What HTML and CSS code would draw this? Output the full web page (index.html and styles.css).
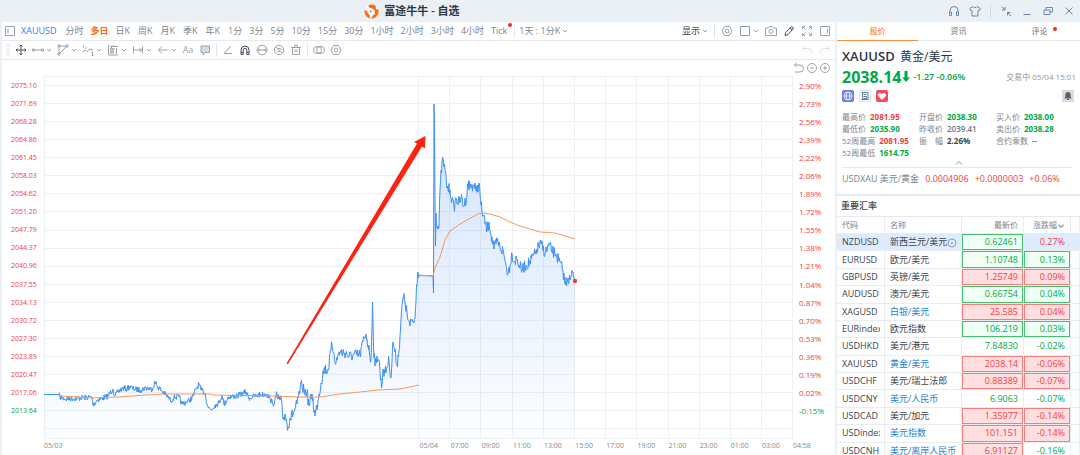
FILE: index.html
```html
<!DOCTYPE html>
<html lang="zh-CN">
<head>
    <meta charset="UTF-8">
    <meta name="viewport" content="width=device-width, initial-scale=1.0">
    <title>富途牛牛 - 自选</title>
    <link rel="stylesheet" href="styles.css">
</head>
<body>
    <!-- shared icons -->
    <svg class="defs" width="0" height="0" aria-hidden="true">
        <symbol id="chev" viewBox="0 0 6 6"><path d="M1 2l2 2 2-2"/></symbol>
        <symbol id="hex" viewBox="0 0 12 12"><path d="M3.500 1.500h5L11 6l-2.500 4.500h-5L1 6z"/><circle cx="6" cy="6" r="2"/></symbol>
    </svg>

    <header class="titlebar">
        <div class="brand">
            <svg class="logo" viewBox="0 0 16 16"><circle cx="8" cy="8" r="7.500" fill="#ff6a13"/><path d="M.600 6C1.200 3.500 2.800 1.700 4.800 1c-.300 1.800.500 3 2.200 3.200 2.500.300 4.500 1.800 4.700 4.300.200 2-.700 3-2.200 3.200-.200 1.800-1.500 3.200-3.500 3.600.600-1.500.500-2.800-.300-3.800C4 10.500 3.300 9 3.500 7.200 2.300 7.300 1.300 7 .600 6zM12.500 1.800L15.500 5l-2.800 1z" fill="#fff"/><circle cx="7.300" cy="7.800" r="1" fill="#ff6a13"/></svg>
            <h1>富途牛牛 - 自选</h1>
        </div>
        <div class="window-btns">
            <button aria-label="客服"><svg class="ico" viewBox="0 0 12 12"><path d="M2 7V5.500a4 4 0 0 1 8 0V7M1.500 7h2v3.500h-2zM8.500 7h2v3.500h-2z"/></svg></button>
            <button aria-label="皮肤"><svg class="ico" viewBox="0 0 12 12"><path d="M4 1.500L.700 3.500 2 6l1-.500V11h6V5.500l1 .500 1.300-2.500L8 1.500C7.500 3 4.500 3 4 1.500z"/></svg></button>
            <i class="sep"></i>
            <button aria-label="精简"><svg class="ico" viewBox="0 0 12 12"><path d="M1.500 1.500L5 5M2 5h3V2M11 11L7.500 7.500M7.500 10.500v-3h3"/></svg></button>
            <button aria-label="最小化"><svg class="ico" viewBox="0 0 12 12"><path d="M2.500 9.500h7"/></svg></button>
            <button aria-label="还原"><svg class="ico" viewBox="0 0 12 12"><path d="M2 5h6v4.500H2zM4 5V2.500h6.500V7H8"/></svg></button>
            <button aria-label="关闭"><svg class="ico" viewBox="0 0 12 12"><path d="M2.500 2.500l7 7M9.500 2.500l-7 7"/></svg></button>
        </div>
    </header>

    <div class="main">
        <section class="chart-pane">
            <nav class="periods">
                <button aria-label="侧栏"><svg class="ico" viewBox="0 0 12 12"><path d="M1.500 1.500h9v9h-9zM4 3.500v5"/></svg></button>
                <button class="symbol">XAUUSD</button>
                <button>分时</button>
                <button class="on">多日</button>
                <button class="k">日K</button>
                <button class="k">周K</button>
                <button class="k">月K</button>
                <button class="k">季K</button>
                <button class="k">年K</button>
                <button>1分</button>
                <button>3分</button>
                <button>5分</button>
                <button>10分</button>
                <button>15分</button>
                <button>30分</button>
                <button>1小时</button>
                <button>2小时</button>
                <button>3小时</button>
                <button>4小时</button>
                <button class="tick">Tick<i class="dot"></i></button>
                <button class="range">1天 : 1分K<svg class="chev"><use href="#chev"/></svg></button>
                <div class="period-tools">
                    <button class="show">显示<svg class="chev"><use href="#chev"/></svg></button>
                    <i class="sep"></i>
                    <button aria-label="设置"><svg class="ico"><use href="#hex"/></svg></button>
                    <button aria-label="布局" class="layout"><svg class="ico blue" viewBox="0 0 12 12"><path d="M1.500 1.500h9v9h-9z"/></svg><svg class="chev"><use href="#chev"/></svg></button>
                    <button aria-label="截图"><svg class="ico" viewBox="0 0 12 12"><path d="M.5 3h3l1-1.500h3l1 1.500h3v7.500H.5z"/><circle cx="6" cy="6.500" r="2"/></svg></button>
                    <button aria-label="画线"><svg class="ico dark" viewBox="0 0 12 12"><path d="M2 10.500l.800-3L8 2c1-1 3 .700 2 2L4.800 9.700zM7 3l2 2"/></svg></button>
                    <button aria-label="全屏"><svg class="ico" viewBox="0 0 12 12"><path d="M1.500 4V1.500H4M8 1.500h2.500V4M10.500 8v2.500H8M4 10.500H1.500V8M2 2l2.500 2.500M10 2L7.500 4.500M10 10L7.500 7.500M2 10l2.500-2.500"/></svg></button>
                    <button aria-label="右侧栏"><svg class="ico" viewBox="0 0 12 12"><path d="M1.500 1.500h9v9h-9zM8.500 3.500v5"/></svg></button>
                </div>
            </nav>

            <div class="draw-tools">
                <i class="grip"></i>
                <button aria-label="移动"><svg class="ico dark" viewBox="0 0 12 12"><path d="M6 1v10M1 6h10M4.500 2.500L6 1l1.500 1.500M4.500 9.500L6 11l1.500-1.500M2.500 4.500L1 6l1.500 1.500M9.500 4.500L11 6 9.500 7.500"/></svg></button>
                <button aria-label="线段"><svg class="ico" viewBox="0 0 12 12"><path d="M3 6h6M.5 5h2v2h-2zM9.500 5h2v2h-2z"/></svg><svg class="chev"><use href="#chev"/></svg></button>
                <button aria-label="形状"><svg class="ico" viewBox="0 0 12 12"><path d="M3 2h6M2 3v6M9 3L3 9M1 1h2v2H1zM9 1h2v2H9zM1 9h2v2H1z"/></svg><svg class="chev"><use href="#chev"/></svg></button>
                <button aria-label="波浪"><svg class="ico" viewBox="0 0 12 12"><path d="M.5 8.500L3 6l2 1.500L8 5l3 1M1.500 1.500v2M3 5l1.500-2M9.500 8.500l1-.500v3.500M9.500 11.500h2"/></svg><svg class="chev"><use href="#chev"/></svg></button>
                <button aria-label="形态"><svg class="ico" viewBox="0 0 12 12"><path d="M1.500 1v10H11M3 2.500h8M3 5h5M3 8h4M4 10V4l3-3M9.500 4v6M6 4v6"/></svg><svg class="chev"><use href="#chev"/></svg></button>
                <button aria-label="测量"><svg class="ico" viewBox="0 0 12 12"><path d="M1.500 2.500v7M10.500 2.500v7M2 6h8M7.500 4l2 2-2 2"/></svg><svg class="chev"><use href="#chev"/></svg></button>
                <button aria-label="箭头"><svg class="ico" viewBox="0 0 12 12"><path d="M1.500 6h9M5 2.500L1.500 6 5 9.500"/></svg><svg class="chev"><use href="#chev"/></svg></button>
                <button class="aa">Aa</button>
                <button aria-label="批注"><svg class="ico" viewBox="0 0 12 12"><path d="M2 2h8.500v6.500H6L4 11V8.500H2z" fill="#d9dde2"/></svg></button>
                <i class="sep"></i>
                <button aria-label="角度"><svg class="ico" viewBox="0 0 12 12"><path d="M9 2L2 9.500h8"/></svg></button>
                <button aria-label="磁铁"><svg class="ico dark" viewBox="0 0 12 12"><path d="M2 10.500V6a4 4 0 0 1 8 0v4.500H7.800V6a1.800 1.800 0 0 0-3.600 0v4.500zM2 8.500h2M8 8.500h2"/></svg></button>
                <button aria-label="连续"><svg class="ico" viewBox="0 0 12 12"><path d="M1.500 4.500a4.700 4.700 0 0 1 9 0M1.500 7.500a4.700 4.700 0 0 0 9 0M3 6h6M1 5h2v2H1zM9 5h2v2H9z"/></svg></button>
                <button aria-label="隐藏"><svg class="ico" viewBox="0 0 12 12"><circle cx="6" cy="6" r="4.700"/><path d="M3 3l6 6M3.500 6.500C5 8 7 8 7.500 7.500M5 4.500c1.500-.500 3 .500 3.500 1.500"/></svg></button>
                <button aria-label="删除"><svg class="ico" viewBox="0 0 12 12"><path d="M1 3.500h10M4.500 3V1.500h3V3M2.500 3.500v7h7v-7M5 5.500v3M7 5.500v3"/></svg></button>
                <i class="sep"></i>
                <button aria-label="对比"><svg class="ico" viewBox="0 0 12 12"><path d="M4 2.500h1a3.500 3.500 0 0 1 0 7H4a3.500 3.500 0 0 1 0-7zM7 2.500h1a3.500 3.500 0 0 1 0 7H7a3.500 3.500 0 0 1 0-7z"/></svg></button>
                <button aria-label="画线设置"><svg class="ico"><use href="#hex"/></svg></button>
                <div class="history">
                    <button aria-label="撤销" disabled><svg class="ico" viewBox="0 0 12 12"><path d="M4.500 1.500L1.500 4.500l3 3M1.500 4.500H7c3 0 4 2 3.500 5"/></svg></button>
                    <button aria-label="重做" disabled><svg class="ico" viewBox="0 0 12 12"><path d="M7.500 1.500l3 3-3 3M10.500 4.500H5c-3 0-4 2-3.500 5"/></svg></button>
                </div>
            </div>

            <div class="zoom-tools">
                <button aria-label="重置"><svg class="ico" viewBox="0 0 12 12"><path d="M3.500 1L1.500 3l2 2M1.500 3H7a3.500 3.500 0 0 1 0 7H2"/></svg></button>
                <button aria-label="缩小"><svg class="ico" viewBox="0 0 12 12"><circle cx="6" cy="6" r="4.500"/><path d="M4 6h4"/></svg></button>
                <button aria-label="放大"><svg class="ico" viewBox="0 0 12 12"><circle cx="6" cy="6" r="4.500"/><path d="M4 6h4M6 4v4"/></svg></button>
            </div>

            <div class="chart">
                <div class="scale prices" id="prices"></div>
                <svg class="plot" id="plot" viewBox="44 76 749 363" preserveAspectRatio="none">
                    <defs>
                        <linearGradient id="fade" gradientUnits="userSpaceOnUse" x1="0" y1="104" x2="0" y2="439">
                            <stop offset="0" stop-color="#3c86f5" stop-opacity=".24"/>
                            <stop offset="1" stop-color="#3c86f5" stop-opacity=".01"/>
                        </linearGradient>
                    </defs>
                    <path id="grid" class="grid"/>
                    <path id="area" fill="url(#fade)"/>
                    <path id="line" class="line"/>
                    <path class="avg" d="M59 395L62 396 92 398 120 397 145 395 165 394 210 394 213 395 273 396 300 397 320 397 340 394 360 392 378 390 400 389 419 385"/>
                    <path class="avg" d="M419 275L433 276 435 268 440 257 445 240 450 231 457 226 467 220 478 214 483 213 490 214 500 217 510 222 520 226 533 230 540 232 555 233 565 236 575 239"/>
                    <circle cx="575" cy="281" r="2.200" fill="#f23a3a"/>
                    <path d="M286.500 363.500L417 143.500 414 142 425.500 136 425 148.500 422 146.500 288 364z" fill="#fa2314"/>
                </svg>
                <div class="scale percents" id="percents"></div>
            </div>
            <div class="times">
                <span>05/03</span><span>05/04</span><span>07:00</span><span>09:00</span><span>11:00</span><span>13:00</span><span>15:00</span><span>17:00</span><span>19:00</span><span>21:00</span><span>23:00</span><span>01:00</span><span>03:00</span><span>04:58</span>
            </div>
        </section>

        <aside class="quote">
            <nav class="tabs">
                <button class="on">报价</button>
                <button>资讯</button>
                <button><span class="tab-text">评论<i class="dot"></i></span></button>
            </nav>
            <div class="summary">
                <h2>XAUUSD <span>黄金/美元</span></h2>
                <div class="price-row">
                    <strong>2038.14</strong>
                    <svg class="down" viewBox="0 0 8 12"><path d="M2.500 0h3v6.500H8L4 11 0 6.500h2.500z" fill="#00a843"/></svg>
                    <b>-1.27 -0.06%</b>
                    <span class="status">交易中 05/04 15:01</span>
                </div>
                <div class="badges">
                    <svg viewBox="0 0 12 12"><rect width="12" height="12" rx="2" fill="#6b7fe8"/><g fill="none" stroke="#fff" stroke-width=".8"><circle cx="6" cy="6" r="4"/><ellipse cx="6" cy="6" rx="1.800" ry="4"/><path d="M2 6h8"/></g></svg>
                    <svg viewBox="0 0 12 12"><rect x=".5" y=".5" width="11" height="11" fill="#fff" stroke="#dce3ea"/><path d="M3.500 10V2.500M2.500 2.500h6.500v7M4.500 4.500h3M4.500 6.500h3v2h-3M2.500 9.500h7" fill="none" stroke="#5f7d9c"/></svg>
                    <svg viewBox="0 0 12 12"><rect width="12" height="12" rx="2" fill="#fb4564"/><path d="M6 10L2.300 6.300C.800 4.300 3.800 1.500 6 4c2.200-2.500 5.200.300 3.700 2.300z" fill="#fff"/></svg>
                    <button class="bell" aria-label="提醒"><svg viewBox="0 0 12 12"><path d="M6 2c2 0 2.700 1.500 2.700 3v2l1 1.500H2.300l1-1.500V5c0-1.500.700-3 2.700-3zM5 9h2v1H5z" fill="#59616b"/></svg></button>
                </div>
                <dl class="stats">
                    <div><dt>最高价</dt><dd class="up">2081.95</dd></div>
                    <div><dt>开盘价</dt><dd class="dn">2038.30</dd></div>
                    <div><dt>买入价</dt><dd class="dn">2038.00</dd></div>
                    <div><dt>最低价</dt><dd class="dn">2035.90</dd></div>
                    <div><dt>昨收价</dt><dd class="flat">2039.41</dd></div>
                    <div><dt>卖出价</dt><dd class="dn">2038.28</dd></div>
                    <div><dt>52周最高</dt><dd class="up">2081.95</dd></div>
                    <div><dt>振　幅</dt><dd>2.26%</dd></div>
                    <div><dt>合约乘数</dt><dd class="flat">--</dd></div>
                    <div><dt>52周最低</dt><dd class="dn">1614.75</dd></div>
                </dl>
                <button class="fold" aria-label="收起"><svg viewBox="0 0 8 6"><path d="M1 4.500l3-3 3 3"/></svg></button>
                <div class="related"><span>USDXAU 美元/黄金</span><em>0.0004906</em><em>+0.0000003</em><em>+0.06%</em></div>
            </div>
            <h3>重要汇率</h3>
            <div class="table-wrap">
                <table>
                    <colgroup><col class="c-code"><col class="c-name"><col class="c-price"><col class="c-change"><col></colgroup>
                    <thead>
                        <tr><th>代码</th><th>名称</th><th class="num">最新价</th><th class="num">涨跌幅<svg class="chev"><use href="#chev"/></svg></th><th></th></tr>
                    </thead>
                    <tbody>
                        <tr class="selected"><td><span>NZDUSD</span></td><td><span>新西兰元/美元<svg class="target" viewBox="0 0 10 10"><circle cx="5" cy="5" r="4"/><circle cx="5" cy="5" r=".6"/></svg></span></td><td class="num dn box">0.62461</td><td class="num up">0.27%</td><td></td></tr>
                        <tr><td><span>EURUSD</span></td><td><span>欧元/美元</span></td><td class="num dn box">1.10748</td><td class="num dn box">0.13%</td><td></td></tr>
                        <tr><td><span>GBPUSD</span></td><td><span>英镑/美元</span></td><td class="num up box">1.25749</td><td class="num up box">0.09%</td><td></td></tr>
                        <tr><td><span>AUDUSD</span></td><td><span>澳元/美元</span></td><td class="num dn box">0.66754</td><td class="num dn box">0.04%</td><td></td></tr>
                        <tr><td><span>XAGUSD</span></td><td><span><a href="#">白银/美元</a></span></td><td class="num up box">25.585</td><td class="num up box">0.04%</td><td></td></tr>
                        <tr><td><span>EURindex</span></td><td><span>欧元指数</span></td><td class="num dn box">106.219</td><td class="num dn box">0.03%</td><td></td></tr>
                        <tr><td><span>USDHKD</span></td><td><span>美元/港元</span></td><td class="num dn">7.84830</td><td class="num dn">-0.02%</td><td></td></tr>
                        <tr><td><span>XAUUSD</span></td><td><span><a href="#">黄金/美元</a></span></td><td class="num up box">2038.14</td><td class="num up box">-0.06%</td><td></td></tr>
                        <tr><td><span>USDCHF</span></td><td><span>美元/瑞士法郎</span></td><td class="num up box">0.88389</td><td class="num up box">-0.07%</td><td></td></tr>
                        <tr><td><span>USDCNY</span></td><td><span><a href="#">美元/人民币</a></span></td><td class="num dn">6.9063</td><td class="num dn">-0.07%</td><td></td></tr>
                        <tr><td><span>USDCAD</span></td><td><span>美元/加元</span></td><td class="num up box">1.35977</td><td class="num up box">-0.14%</td><td></td></tr>
                        <tr><td><span>USDindex</span></td><td><span><a href="#">美元指数</a></span></td><td class="num up box">101.151</td><td class="num up box">-0.14%</td><td></td></tr>
                        <tr><td><span>USDCNH</span></td><td><span><a href="#">美元/离岸人民币</a></span></td><td class="num up box">6.91127</td><td class="num dn">-0.16%</td><td></td></tr>
                    </tbody>
                </table>
            </div>
        </aside>
    </div>
    <script src="chart.js"></script>
</body>
</html>
```
FILE: styles.css
```css
* {
    box-sizing: border-box;
}
body {
    margin: 0;
    height: 100vh;
    display: flex;
    flex-direction: column;
    overflow: hidden;
    background: #ebf0f5;
    color: #3c444d;
    font-family: "Open Sans", "Noto Sans CJK SC", sans-serif;
    font-size: 8px;
    line-height: 12px;
}
button {
    display: flex;
    align-items: center;
    justify-content: center;
    gap: 2px;
    margin: 0;
    padding: 0;
    border: none;
    background: none;
    font: inherit;
    color: inherit;
    white-space: nowrap;
    cursor: pointer;
}
h1, h2, h3, dl, dd {
    margin: 0;
}
a {
    color: #1c7fd0;
    text-decoration: none;
}
.defs {
    position: absolute;
}
.ico {
    width: 12px;
    height: 12px;
    fill: none;
    stroke: #9aa2ab;
    stroke-width: 1;
}
.ico.dark {
    stroke: #454e5a;
}
.ico.blue {
    stroke: #7e9cc0;
}
.chev {
    width: 6px;
    height: 6px;
    fill: none;
    stroke: #9aa2ab;
    stroke-width: 1;
}
.sep {
    width: 1px;
    height: 14px;
    background: #e1e6eb;
}
.dot {
    position: absolute;
    top: -2px;
    right: -5px;
    width: 4px;
    height: 4px;
    border-radius: 50%;
    background: #f62b2b;
}
.up {
    color: #f23c3c;
}
.dn {
    color: #00a843;
}

/* title bar */
.titlebar {
    display: grid;
    grid-template-columns: 1fr auto 1fr;
    align-items: center;
    height: 22px;
    flex: none;
}
.brand {
    grid-column: 2;
    display: flex;
    align-items: center;
    gap: 5px;
    margin-right: 256px;
}
.logo {
    width: 15px;
    height: 15px;
}
.titlebar h1 {
    font-size: 11px;
    line-height: 16px;
    font-weight: 600;
    color: #2d3640;
    white-space: nowrap;
}
.window-btns {
    display: flex;
    justify-content: flex-end;
    align-items: center;
    gap: 9px;
    padding-right: 5px;
}
.window-btns .ico {
    stroke: #6d88a8;
}
.window-btns .sep {
    background: #d5dde5;
}

/* chart side */
.main {
    flex: 1;
    min-height: 0;
    display: flex;
    padding-left: 2px;
}
.chart-pane {
    flex: 1;
    min-width: 0;
    display: flex;
    flex-direction: column;
    background: #fff;
}
.periods, .draw-tools {
    display: flex;
    align-items: center;
    height: 19px;
    flex: none;
    border-bottom: 1px solid #e6eaee;
    color: #7b848e;
    font-size: 9px;
}
.periods {
    gap: 7px;
    padding: 0 4px 0 2px;
}
.periods .symbol {
    margin: 0 2px 0 -2px;
    color: #2f7df6;
}
.periods .on {
    color: #ff6a13;
    font-weight: 600;
}
.periods .k {
    padding-right: 1px;
}
.tick {
    position: relative;
}
.range {
    padding-left: 4px;
    border-left: 1px solid #e1e6eb;
}
.period-tools {
    display: flex;
    align-items: center;
    gap: 6px;
    margin-left: auto;
}
.show {
    color: #3c444d;
}
.draw-tools {
    gap: 5px;
    padding: 0 4px;
}
.grip {
    width: 4px;
    height: 12px;
    background: repeating-linear-gradient(#e3e7eb 0 1px, #fff 1px 2px);
}
.draw-tools .aa {
    width: 12px;
    color: #9aa2ab;
}
.history {
    display: flex;
    gap: 6px;
    margin-left: auto;
}
.history .ico {
    stroke: #dde1e6;
}
.zoom-tools {
    display: flex;
    justify-content: flex-end;
    gap: 1px;
    height: 16px;
    flex: none;
    padding-right: 4px;
}
.chart {
    flex: 1;
    min-height: 0;
    display: grid;
    grid-template-columns: 42px 1fr 42px;
    grid-template-rows: 100%;
}
.plot {
    display: block;
    width: 100%;
    height: 100%;
}
.grid {
    fill: none;
    stroke: #edf1f5;
    stroke-width: 1;
}
.line {
    fill: none;
    stroke: #3a8ff7;
    stroke-width: 1;
    stroke-linejoin: round;
}
.avg {
    fill: none;
    stroke: #f5995a;
    stroke-width: 1;
}
.scale {
    display: flex;
    flex-direction: column;
    padding: 1px 0 19px;
}
.scale span {
    flex: 1;
    display: flex;
    align-items: center;
}
.prices {
    padding-left: 9px;
    font-size: 7px;
}
.percents {
    padding-left: 6px;
}
.times {
    display: grid;
    grid-template-columns: 374fr repeat(12, 31fr) 0;
    height: 16px;
    flex: none;
    padding: 1px 42px 0;
    color: #7f8790;
    font-size: 7px;
    white-space: nowrap;
}

/* quote side */
.quote {
    width: 245px;
    flex: none;
    display: flex;
    flex-direction: column;
    background: #fff;
    border-left: 2px solid #ebf0f5;
}
.tabs {
    display: grid;
    grid-template-columns: repeat(3, 1fr);
    height: 19px;
    flex: none;
    border-bottom: 1px solid #e6eaee;
    color: #6b747e;
}
.tabs .on {
    margin-bottom: -1px;
    border-bottom: 1px solid #ff8a3c;
    color: #ff6a13;
}
.tab-text {
    position: relative;
}
.tab-text .dot {
    top: 2px;
    right: -9px;
}
.summary {
    padding: 6px 4px 0 5px;
}
.summary h2 {
    font-size: 13px;
    line-height: 18px;
    font-weight: 600;
    color: #2d3640;
}
.summary h2 span {
    margin-left: 2px;
    font-size: 12px;
    font-weight: 400;
}
.price-row {
    display: flex;
    align-items: center;
    height: 21px;
    color: #00a843;
}
.price-row strong {
    font-size: 16px;
}
.price-row b {
    margin-left: 3px;
    font-size: 9px;
    font-weight: 600;
}
.down {
    width: 8px;
    height: 12px;
    margin-left: 1px;
}
.status {
    margin-left: auto;
    color: #8d959e;
}
.badges {
    display: flex;
    align-items: center;
    gap: 5px;
    height: 17px;
}
.badges svg {
    width: 12px;
    height: 12px;
}
.bell {
    margin-left: auto;
    margin-right: 2px;
    background: #d8dce0;
}
.stats {
    display: grid;
    grid-template-columns: 77px 77px 1fr;
    margin-top: 7px;
}
.stats div {
    display: flex;
    gap: 4px;
    white-space: nowrap;
}
.stats dt {
    color: #7b848e;
}
.stats dd {
    font-weight: 700;
}
.stats .flat {
    font-weight: 600;
    color: #6b747e;
}
.fold {
    width: 100%;
    height: 8px;
}
.fold svg {
    width: 8px;
    height: 6px;
    fill: none;
    stroke: #7e93ab;
}
.related {
    display: flex;
    gap: 6px;
    margin-right: 4px;
    padding: 5px 0 9px;
    border-top: 1px solid #e6eaee;
    color: #7b848e;
    font-size: 9px;
    white-space: nowrap;
}
.related em {
    font-style: normal;
    color: #f23c3c;
}
.quote h3 {
    padding: 3px 4px;
    border-top: 2px solid #e3e9ef;
    border-bottom: 1px solid #e6eaee;
    font-size: 9px;
    line-height: 14px;
    font-weight: 500;
}
.table-wrap {
    flex: 1;
    min-height: 0;
    overflow: hidden;
}
table {
    width: 100%;
    height: 243px;
    table-layout: fixed;
    border-collapse: separate;
    border-spacing: 0;
    font-size: 9px;
}
.c-code {
    width: 48px;
}
.c-name {
    width: 77px;
}
.c-price {
    width: 62px;
}
.c-change {
    width: 47px;
}
th, td {
    padding: 0 0 0 5px;
    border-right: 1px solid #e9edf1;
    border-bottom: 1px solid #e9edf1;
    text-align: left;
    white-space: nowrap;
}
th {
    height: 17px;
    color: #7b848e;
    font-size: 8px;
    font-weight: 400;
}
td span {
    display: block;
    width: 38px;
    overflow: hidden;
}
td:nth-child(2) span {
    width: auto;
}
.num {
    padding: 0 5px 0 0;
    text-align: right;
}
th .chev {
    width: 8px;
    height: 8px;
    vertical-align: middle;
}
.up.box {
    background: #ffdfdf;
    box-shadow: inset 0 0 0 1px #f27d7d;
}
.dn.box {
    background: #f0fff4;
    box-shadow: inset 0 0 0 1px #45bf70;
}
.selected {
    background: #dcecfd;
}
.target {
    width: 10px;
    height: 10px;
    vertical-align: middle;
    fill: none;
    stroke: #8a9bb0;
}
```
FILE: chart.js
```js
// axis labels
const prices = ["2075.10", "2071.69", "2068.28", "2064.86", "2061.45", "2058.03", "2054.62", "2051.20", "2047.79", "2044.37",
    "2040.96", "2037.55", "2034.13", "2030.72", "2027.30", "2023.89", "2020.47", "2017.06", "2013.64"];
const percents = ["2.90%", "2.73%", "2.56%", "2.39%", "2.22%", "2.06%", "1.89%", "1.72%", "1.55%", "1.38%",
    "1.21%", "1.04%", "0.87%", "0.70%", "0.53%", "0.36%", "0.19%", "0.02%", "-0.15%"];

function fillScale(id, labels) {
    const box = document.getElementById(id);
    labels.forEach(function (text) {
        const span = document.createElement("span");
        span.textContent = text;
        span.className = text === "2013.64" || text.startsWith("-") ? "dn" : "up";
        box.appendChild(span);
    });
}
fillScale("prices", prices);
fillScale("percents", percents);

// grid
let grid = "M44.5 76V439M44 76.5H793M44 438.5H793";
for (let i = 0; i < 20; i++) {
    grid += "M44 " + (Math.round(86 + i * 18.07) - 0.5) + "H793";
}
for (let i = 0; i < 13; i++) {
    grid += "M" + (Math.round(418 + i * 31.2) + 0.5) + " 76V439";
}
document.getElementById("grid").setAttribute("d", grid);

// turning points of the minute line
const points = [
    [44, 394.5], [59, 394.5], [60, 397], [65, 399], [80, 398], [92, 397], [93, 405], [97, 400], [103, 398], [108, 396],
    [111, 392], [113, 389], [115, 396], [118, 392], [123, 388], [127, 389], [130, 386], [133, 389], [141, 390], [145, 388],
    [152, 389], [155, 382], [158, 387], [164, 393], [168, 397], [171, 401], [174, 397], [179, 397], [182, 404], [186, 402],
    [190, 400], [193, 396], [196, 389], [199, 384], [201, 390], [205, 393], [208, 407], [211, 410], [215, 405], [219, 403],
    [222, 395], [224, 405], [228, 397], [237, 396], [246, 392], [249, 398], [258, 395], [266, 394], [270, 398], [273, 405],
    [276, 397], [280, 400], [282, 405], [283, 419], [285, 414], [288, 427], [290, 418], [294, 412], [297, 404], [300, 390],
    [302, 385], [304, 391], [307, 392], [309, 406], [312, 394], [315, 416], [318, 400], [321, 383], [324, 369], [328, 370],
    [331, 350], [332, 345], [334, 353], [336, 363], [339, 352], [346, 353], [349, 357], [353, 355], [360, 355], [364, 338],
    [366, 334], [368, 345], [371, 360], [372.5, 302], [373.5, 345], [375, 366], [377, 356], [379, 360], [381.5, 388], [383, 369],
    [385, 373], [389, 360], [391, 378], [393, 342], [395, 352], [397, 365], [399, 350], [401, 320], [403, 297], [405, 301],
    [408, 320], [410, 326], [412, 319], [414, 323], [415, 318], [416.5, 285], [418, 272], [419, 275.5], [433, 276], [433.5, 293],
    [434, 104], [434.5, 127], [435, 200], [435.5, 246], [436, 213], [437, 227], [439, 227], [440, 190], [442, 162], [443.5, 162],
    [445, 170], [447, 188], [450, 190], [452, 200], [454, 208], [456, 198], [459, 203], [461, 198], [464, 206], [467, 195],
    [467.5, 184], [470, 186], [474, 185], [476, 191], [479, 183], [481, 205], [483, 215], [487, 230], [489, 222], [491, 235],
    [494, 249], [497, 241], [500, 247], [503, 251], [506, 265], [508, 273], [510, 265], [512, 253], [514, 261], [517, 259],
    [519, 265], [522, 270], [525, 266], [530, 262], [535, 254], [537, 249], [541, 244], [545, 253], [549, 245], [552, 251],
    [556, 254], [559, 261], [563, 271], [565, 284], [568, 278], [570, 280], [573, 272], [575, 280]
];

// small repeatable wobble between the turning points
let seed = 7;
function wobble(size) {
    seed = (seed * 16807) % 2147483647;
    return (seed / 2147483647 - 0.5) * size;
}

let line = "M44 394.5";
for (let i = 1; i < points.length; i++) {
    const [x0, y0] = points[i - 1];
    const [x1, y1] = points[i];
    const flat = x1 <= 59 || (x0 >= 419 && x1 <= 436);
    const size = x1 < 280 ? 6 : 12;
    if (!flat) {
        for (let x = x0 + 0.5; x < x1 - 0.3; x += 0.5) {
            const y = y0 + (y1 - y0) * (x - x0) / (x1 - x0) + wobble(size);
            line += "L" + x.toFixed(1) + " " + y.toFixed(1);
        }
    }
    line += "L" + x1 + " " + y1;
}
document.getElementById("line").setAttribute("d", line);
document.getElementById("area").setAttribute("d", line + "V439H44Z");
```
